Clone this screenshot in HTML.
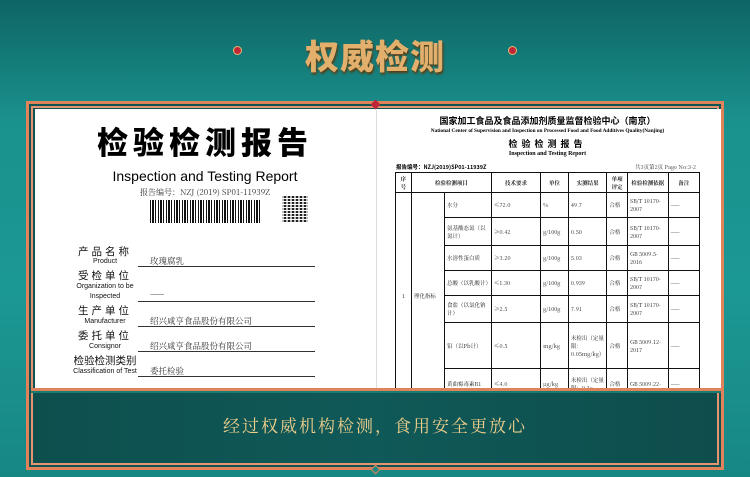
<!DOCTYPE html><html><head><meta charset="utf-8"><style>
*{margin:0;padding:0;box-sizing:border-box}
body{width:750px;height:477px;overflow:hidden;position:relative;font-family:"Liberation Sans","Noto Sans CJK SC",sans-serif;background:linear-gradient(180deg,#0e6564 0%,#1a918d 25%,#1c9894 60%,#178784 100%)}
.a{position:absolute}
.title{left:0;width:750px;top:30px;text-align:center;font-family:"Noto Sans CJK SC",sans-serif;font-weight:900;font-size:34px;color:#e2b06c;letter-spacing:1px;text-shadow:1px 2px 2px #5a3a10}
.dot{width:7px;height:7px;border-radius:50%;background:#c0283a;box-shadow:0 0 0 1px #e9b86e;top:47px}
.frame{left:26px;top:101px;width:698px;height:369px;border:3px solid #e0825a;background:#0f5452}
.inner{left:31px;top:106px;width:688px;height:359px;border:2px solid #e59370}
.white{left:35px;top:109px;width:686px;height:279px;background:#fff}
.sep{left:31px;top:388px;width:690px;height:3px;background:#e0825a}
.panel{left:33px;top:393px;width:684px;height:70px;background:linear-gradient(90deg,#0e4f4e,#0f5958,#0e4d4c)}
.slogan{left:0;width:750px;top:412px;text-align:center;font-family:"Noto Serif CJK SC",serif;font-size:17px;color:#f0cf8a;letter-spacing:2px}
.lbl{font-family:"Noto Sans CJK SC",sans-serif;font-size:10.5px;text-align:center;width:90px;left:60px;color:#111;letter-spacing:3px}
.en{font-size:7px;text-align:center;width:90px;left:60px;color:#111}
.ln{left:138px;width:177px;border-bottom:1px solid #333;height:1px}
.val{left:150px;font-family:"Noto Serif CJK SC",serif;font-size:8.5px;color:#333}
table{border-collapse:collapse;font-family:"Noto Serif CJK SC",serif;font-size:5.5px;color:#222}
td{border:1px solid #111;padding:1px 2px;vertical-align:middle}
</style></head><body>
<div class="a dot" style="left:234px"></div><div class="a dot" style="left:509px"></div>
<div class="a title">权威检测</div>
<div class="a frame"></div><div class="a inner"></div>
<div class="a white"></div>
<div class="a" style="left:372px;top:101px;width:7px;height:7px;background:#c0283a;transform:rotate(45deg)"></div>
<div class="a" style="left:376px;top:110px;width:1px;height:278px;background:#ddd"></div>
<div class="a" style="left:50px;top:118px;width:310px;text-align:center;font-family:'Noto Sans CJK SC',sans-serif;font-weight:900;font-size:31px;letter-spacing:5px;color:#000">检验检测报告</div>
<div class="a" style="left:100px;top:168px;width:210px;text-align:center;font-size:14px;color:#000">Inspection and Testing Report</div>
<div class="a" style="left:140px;top:187px;font-family:'Noto Serif CJK SC',serif;font-size:8px;color:#333">报告编号：NZJ (2019) SP01-11939Z</div>
<div class="a" style="left:150px;top:200px;width:112px;height:23px;background:repeating-linear-gradient(90deg,#111 0 1px,#fff 1px 2px,#111 2px 4px,#fff 4px 5px,#111 5px 6px,#fff 6px 8px)"></div>
<div class="a" style="left:282px;top:196px;width:26px;height:26px;background-image:repeating-linear-gradient(90deg,rgba(255,255,255,.7) 0 2px,transparent 2px 4px),repeating-linear-gradient(0deg,#222 0 2px,#fff 2px 3px)"></div>
<div class="a lbl" style="top:244px">产品名称</div><div class="a en" style="top:258px">Product</div>
<div class="a val" style="top:255px">玫瑰腐乳</div><div class="a ln" style="top:266px"></div>
<div class="a lbl" style="top:268px">受检单位</div><div class="a en" style="top:283px">Organization to be</div><div class="a en" style="top:293px">Inspected</div>
<div class="a val" style="top:288px">——</div><div class="a ln" style="top:301px"></div>
<div class="a lbl" style="top:303px">生产单位</div><div class="a en" style="top:318px">Manufacturer</div>
<div class="a val" style="top:315px">绍兴咸亨食品股份有限公司</div><div class="a ln" style="top:326px"></div>
<div class="a lbl" style="top:328px">委托单位</div><div class="a en" style="top:343px">Consignor</div>
<div class="a val" style="top:340px">绍兴咸亨食品股份有限公司</div><div class="a ln" style="top:351px"></div>
<div class="a lbl" style="top:353px;letter-spacing:0">检验检测类别</div><div class="a en" style="top:368px">Classification of Test</div>
<div class="a val" style="top:365px">委托检验</div><div class="a ln" style="top:376px"></div>
<div class="a" style="left:395px;top:114px;width:305px;text-align:center;font-family:'Noto Sans CJK SC',sans-serif;font-weight:700;font-size:9px;color:#000">国家加工食品及食品添加剂质量监督检验中心（南京）</div>
<div class="a" style="left:395px;top:128px;width:305px;text-align:center;font-family:'Liberation Serif',serif;font-weight:700;font-size:5.3px;color:#000">National Center of Supervision and Inspection on Processed Food and Food Additives Quality(Nanjing)</div>
<div class="a" style="left:395px;top:137px;width:305px;text-align:center;font-family:'Noto Sans CJK SC',sans-serif;font-weight:700;font-size:9px;letter-spacing:4px;color:#000">检验检测报告</div>
<div class="a" style="left:395px;top:151px;width:305px;text-align:center;font-family:'Liberation Serif',serif;font-weight:700;font-size:6px;color:#000">Inspection and Testing Report</div>
<div class="a" style="left:396px;top:163px;font-family:'Noto Sans CJK SC',sans-serif;font-weight:700;font-size:5.5px">报告编号：NZJ(2019)SP01-11939Z</div>
<div class="a" style="left:635px;top:163px;font-family:'Noto Serif CJK SC',serif;font-size:5.5px;color:#333">共3页第2页 Page No:3-2</div>
<table class="a" style="left:395px;top:172px;width:305px">
<colgroup><col style="width:16px"><col style="width:34px"><col style="width:48px"><col style="width:50px"><col style="width:28px"><col style="width:35px"><col style="width:21px"><col style="width:41px"><col style="width:32px"></colgroup>
<tr style="height:20px;font-weight:700;text-align:center"><td>序号</td><td colspan="2">检验检测项目</td><td>技术要求</td><td>单位</td><td>实测结果</td><td>单项评定</td><td>检验检测依据</td><td>备注</td></tr>
<tr style="height:25px"><td rowspan="7" style="text-align:center">1</td><td rowspan="7">理化指标</td><td>水分</td><td>≤72.0</td><td>%</td><td>49.7</td><td>合格</td><td>SB/T 10170-2007</td><td>——</td></tr>
<tr style="height:28px"><td>氨基酸态氮（以氮计）</td><td>≥0.42</td><td>g/100g</td><td>0.50</td><td>合格</td><td>SB/T 10170-2007</td><td>——</td></tr>
<tr style="height:25px"><td>水溶性蛋白质</td><td>≥3.20</td><td>g/100g</td><td>5.03</td><td>合格</td><td>GB 5009.5-2016</td><td>——</td></tr>
<tr style="height:25px"><td>总酸（以乳酸计）</td><td>≤1.30</td><td>g/100g</td><td>0.939</td><td>合格</td><td>SB/T 10170-2007</td><td>——</td></tr>
<tr style="height:27px"><td>食盐（以氯化钠计）</td><td>≥2.5</td><td>g/100g</td><td>7.91</td><td>合格</td><td>SB/T 10170-2007</td><td>——</td></tr>
<tr style="height:46px"><td>铅（以Pb计）</td><td>≤0.5</td><td>mg/kg</td><td>未检出（定量限：0.05mg/kg）</td><td>合格</td><td>GB 5009.12-2017</td><td>——</td></tr>
<tr style="height:30px"><td>黄曲霉毒素B1</td><td>≤4.0</td><td>μg/kg</td><td>未检出（定量限：0.1μ</td><td>合格</td><td>GB 5009.22-</td><td>——</td></tr>
</table>
<div class="a" style="left:35px;top:388px;width:686px;height:2px;background:#fff"></div>
<div class="a sep"></div>
<div class="a panel"></div>
<div class="a" style="left:31px;top:391px;width:690px;height:2px;background:#1c7a74"></div>
<div class="a" style="left:372px;top:466px;width:7px;height:7px;background:#1d8a82;border:1px solid #e0825a;transform:rotate(45deg)"></div>
<div class="a slogan">经过权威机构检测，食用安全更放心</div>
</body></html>
